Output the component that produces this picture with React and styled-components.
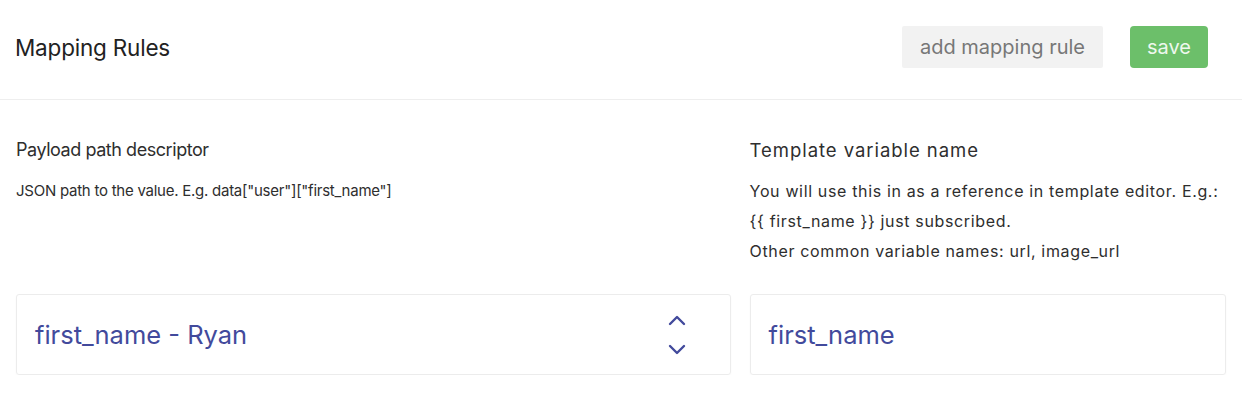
import React from 'react';
import styled, { createGlobalStyle } from 'styled-components';

const GlobalStyle = createGlobalStyle`
  body {
    margin: 0;
    background: #ffffff;
    font-family: Inter, "Noto Sans", sans-serif;
    color: #2b2b2b;
  }
`;

const Header = styled.header`
  height: 100px;
  box-sizing: border-box;
  padding: 0 34px 0 15px;
  display: flex;
  align-items: center;
  justify-content: space-between;
  border-bottom: 1px solid #eeeeee;
`;

const Title = styled.h1`
  margin: 0;
  font-size: 22.5px;
  font-weight: 400;
  letter-spacing: -0.2px;
  color: #222;
  padding-bottom: 4px;
`;

const Actions = styled.div`
  display: flex;
  gap: 27px;
  align-items: center;
  padding-bottom: 5px;
`;

const Button = styled.button`
  height: 42px;
  padding: 0 ${(p) => (p.primary ? '17px' : '18px')};
  border: none;
  border-radius: ${(p) => (p.primary ? '4px' : '2px')};
  background: ${(p) => (p.primary ? '#6cbf6a' : '#f2f2f2')};
  color: ${(p) => (p.primary ? '#eef8ee' : '#777777')};
  font-family: inherit;
  font-size: 20px;
  cursor: pointer;
`;

const Body = styled.main`
  display: grid;
  grid-template-columns: 3fr 2fr;
  column-gap: 19px;
  padding: 36px 16px 0;
`;

const Column = styled.section`
  display: flex;
  flex-direction: column;
`;

// the right column copy runs wider than the left one in the design
const Label = styled.div`
  font-size: ${(p) => (p.wide ? '18.5px' : '18px')};
  letter-spacing: ${(p) => (p.wide ? '0.95px' : '-0.45px')};
  line-height: 28px;
  color: #2e2e2e;
`;

const Help = styled.div`
  margin-top: 12px;
  height: 118px;
  font-size: ${(p) => (p.wide ? '16px' : '15px')};
  letter-spacing: ${(p) => (p.wide ? '0.65px' : '-0.25px')};
  line-height: 30px;
  color: #2e2e2e;
`;

const Field = styled.div`
  height: 81px;
  box-sizing: border-box;
  border: 1px solid #ececec;
  border-radius: 3px;
  box-shadow: 0 1px 2px rgba(0, 0, 0, 0.03);
  display: flex;
  align-items: center;
  justify-content: space-between;
  padding: 0 44px 0 18px;
  font-size: 25.5px;
  color: #424a9c;
`;

const Stepper = styled.div`
  display: flex;
  flex-direction: column;
  gap: 18px;
`;

const Chevron = ({ down }) => (
  <svg width="18" height="11" viewBox="0 0 18 11" fill="none">
    <path
      d={down ? 'M2 2l7 7 7-7' : 'M2 9l7-7 7 7'}
      stroke="#424a9c"
      strokeWidth="2.4"
      strokeLinecap="round"
      strokeLinejoin="round"
    />
  </svg>
);

export default function App() {
  return (
    <>
      <GlobalStyle />
      <Header>
        <Title>Mapping Rules</Title>
        <Actions>
          <Button>add mapping rule</Button>
          <Button primary>save</Button>
        </Actions>
      </Header>
      <Body>
        <Column>
          <Label>Payload path descriptor</Label>
          <Help>JSON path to the value. E.g. data["user"]["first_name"]</Help>
          <Field>
            <span>first_name - Ryan</span>
            <Stepper>
              <Chevron />
              <Chevron down />
            </Stepper>
          </Field>
        </Column>
        <Column>
          <Label wide>Template variable name</Label>
          <Help wide>
            You will use this in as a reference in template editor. E.g.:
            <br />
            {'{{ first_name }}'} just subscribed.
            <br />
            Other common variable names: url, image_url
          </Help>
          <Field>
            <span>first_name</span>
          </Field>
        </Column>
      </Body>
    </>
  );
}
